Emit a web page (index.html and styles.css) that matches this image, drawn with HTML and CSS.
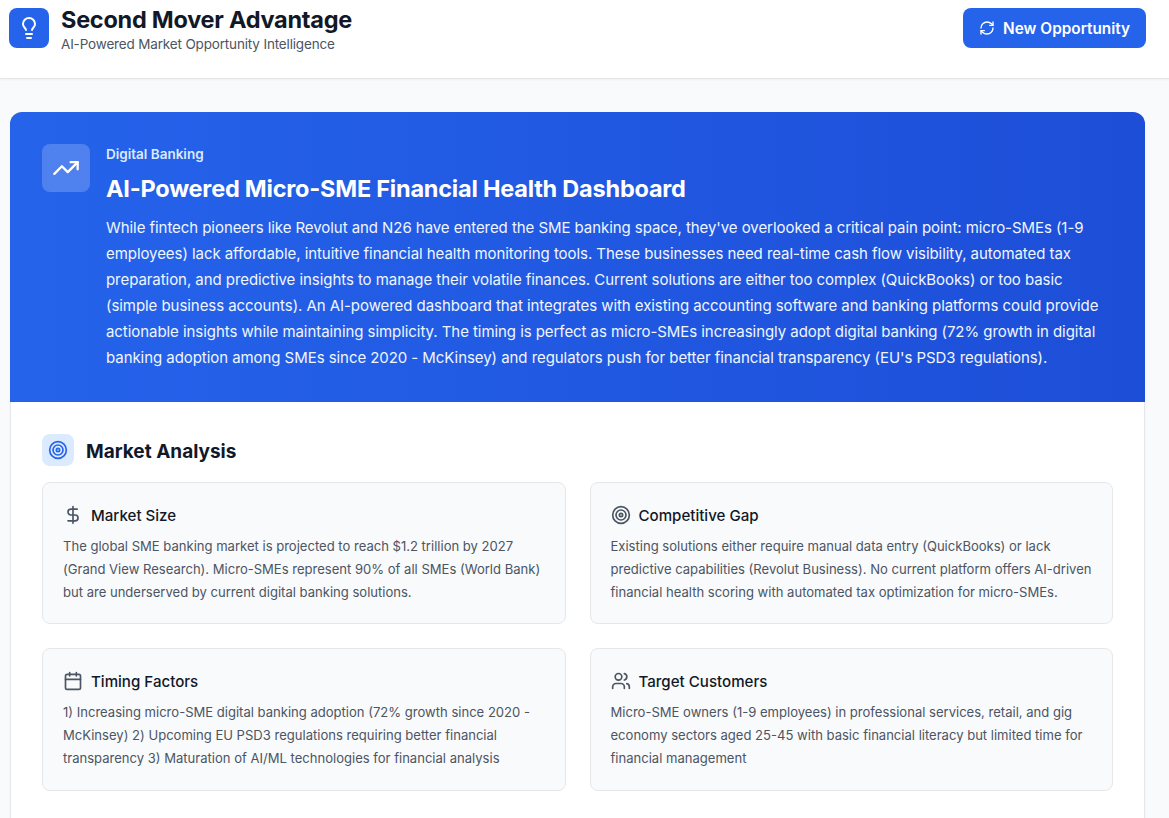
FILE: index.html
```html
<!DOCTYPE html>
<html>
<head>
  <meta charset="utf-8">
  <meta name="viewport" content="width=device-width, initial-scale=1">
  <title>Second Mover Advantage</title>
  <link rel="stylesheet" href="styles.css">
</head>
<body>
<header class="topbar">
  <div class="brand">
    <div class="brand__icon">
      <svg width="24" height="24" viewBox="0 0 24 24" fill="none" stroke="currentColor" stroke-width="2" stroke-linecap="round" stroke-linejoin="round"><path d="M15 14c.2-1 .7-1.7 1.5-2.5 1-.9 1.5-2.2 1.5-3.5A6 6 0 0 0 6 8c0 1 .2 2.2 1.5 3.5.7.7 1.3 1.5 1.5 2.5"/><path d="M9 18h6"/><path d="M10 22h4"/></svg>
    </div>
    <div>
      <h1 class="brand__title">Second Mover Advantage</h1>
      <p class="brand__sub">AI-Powered Market Opportunity Intelligence</p>
    </div>
  </div>
  <button class="new-btn">
    <svg width="16" height="16" viewBox="0 0 24 24" fill="none" stroke="currentColor" stroke-width="2" stroke-linecap="round" stroke-linejoin="round"><path d="M3 12a9 9 0 0 1 9-9 9.75 9.75 0 0 1 6.74 2.74L21 8"/><path d="M21 3v5h-5"/><path d="M21 12a9 9 0 0 1-9 9 9.75 9.75 0 0 1-6.74-2.74L3 16"/><path d="M8 16H3v5"/></svg>
    New Opportunity
  </button>
</header>

<main class="page">
  <section class="report">
    <div class="hero">
      <div class="hero__icon">
        <svg width="28" height="28" viewBox="0 0 24 24" fill="none" stroke="currentColor" stroke-width="2" stroke-linecap="round" stroke-linejoin="round"><path d="m22 7-8.5 8.5-5-5L2 17"/><path d="M16 7h6v6"/></svg>
      </div>
      <div class="hero__body">
        <div class="hero__tag">Digital Banking</div>
        <h2 class="hero__title">AI-Powered Micro-SME Financial Health Dashboard</h2>
        <p class="hero__text">While fintech pioneers like Revolut and N26 have entered the SME banking space, they've overlooked a critical pain point: micro-SMEs (1-9 employees) lack affordable, intuitive financial health monitoring tools. These businesses need real-time cash flow visibility, automated tax preparation, and predictive insights to manage their volatile finances. Current solutions are either too complex (QuickBooks) or too basic (simple business accounts). An AI-powered dashboard that integrates with existing accounting software and banking platforms could provide actionable insights while maintaining simplicity. The timing is perfect as micro-SMEs increasingly adopt digital banking (72% growth in digital banking adoption among SMEs since 2020 - McKinsey) and regulators push for better financial transparency (EU's PSD3 regulations).</p>
      </div>
    </div>

    <div class="analysis">
      <div class="analysis__head">
        <div class="analysis__icon">
          <svg width="20" height="20" viewBox="0 0 24 24" fill="none" stroke="currentColor" stroke-width="2" stroke-linecap="round" stroke-linejoin="round"><circle cx="12" cy="12" r="10"/><circle cx="12" cy="12" r="6"/><circle cx="12" cy="12" r="2"/></svg>
        </div>
        <h3 class="analysis__title">Market Analysis</h3>
      </div>
      <div class="cards">
        <div class="card">
          <div class="card__head">
            <svg width="20" height="20" viewBox="0 0 24 24" fill="none" stroke="currentColor" stroke-width="2" stroke-linecap="round" stroke-linejoin="round"><line x1="12" x2="12" y1="2" y2="22"/><path d="M17 5H9.5a3.5 3.5 0 0 0 0 7h5a3.5 3.5 0 0 1 0 7H6"/></svg>
            <h4>Market Size</h4>
          </div>
          <p>The global SME banking market is projected to reach $1.2 trillion by 2027 (Grand View Research). Micro-SMEs represent 90% of all SMEs (World Bank) but are underserved by current digital banking solutions.</p>
        </div>
        <div class="card">
          <div class="card__head">
            <svg width="20" height="20" viewBox="0 0 24 24" fill="none" stroke="currentColor" stroke-width="2" stroke-linecap="round" stroke-linejoin="round"><circle cx="12" cy="12" r="10"/><circle cx="12" cy="12" r="6"/><circle cx="12" cy="12" r="2"/></svg>
            <h4>Competitive Gap</h4>
          </div>
          <p>Existing solutions either require manual data entry (QuickBooks) or lack predictive capabilities (Revolut Business). No current platform offers AI-driven financial health scoring with automated tax optimization for micro-SMEs.</p>
        </div>
        <div class="card">
          <div class="card__head">
            <svg width="20" height="20" viewBox="0 0 24 24" fill="none" stroke="currentColor" stroke-width="2" stroke-linecap="round" stroke-linejoin="round"><path d="M8 2v4"/><path d="M16 2v4"/><rect width="18" height="18" x="3" y="4" rx="2"/><path d="M3 10h18"/></svg>
            <h4>Timing Factors</h4>
          </div>
          <p>1) Increasing micro-SME digital banking adoption (72% growth since 2020 - McKinsey) 2) Upcoming EU PSD3 regulations requiring better financial transparency 3) Maturation of AI/ML technologies for financial analysis</p>
        </div>
        <div class="card">
          <div class="card__head">
            <svg width="20" height="20" viewBox="0 0 24 24" fill="none" stroke="currentColor" stroke-width="2" stroke-linecap="round" stroke-linejoin="round"><path d="M16 21v-2a4 4 0 0 0-4-4H6a4 4 0 0 0-4 4v2"/><circle cx="9" cy="7" r="4"/><path d="M22 21v-2a4 4 0 0 0-3-3.87"/><path d="M16 3.13a4 4 0 0 1 0 7.75"/></svg>
            <h4>Target Customers</h4>
          </div>
          <p>Micro-SME owners (1-9 employees) in professional services, retail, and gig economy sectors aged 25-45 with basic financial literacy but limited time for financial management</p>
        </div>
      </div>
    </div>
  </section>
</main>
</body>
</html>
```

FILE: styles.css
```css
* {
	box-sizing: border-box;
}

html, body {
	height: 818px;
	overflow: hidden;
}

body {
	margin: 0;
	font-family: Inter, "Noto Sans", sans-serif;
	background: #f9fafb;
	color: #111827;
}

h1, h2, h3, h4, p {
	margin: 0;
}

.topbar {
	display: flex;
	justify-content: space-between;
	align-items: flex-start;
	height: 79px;
	padding: 8px 23px 0 9px;
	background: #fff;
	border-bottom: 1px solid #e5e7eb;
	box-shadow: 0 1px 2px rgba(0, 0, 0, 0.05);
}

.brand {
	display: flex;
	gap: 12px;
}

.brand__icon {
	display: flex;
	justify-content: center;
	align-items: center;
	width: 40px;
	height: 40px;
	border-radius: 8px;
	background: #2563eb;
	color: #fff;
}

.brand__title {
	font-size: 23.5px;
	line-height: 24px;
	font-weight: 700;
	letter-spacing: -0.26px;
}

.brand__sub {
	margin-top: 2px;
	font-size: 13.5px;
	line-height: 20px;
	letter-spacing: -0.16px;
	color: #4b5563;
}

.new-btn {
	display: flex;
	align-items: center;
	gap: 8px;
	height: 40px;
	padding: 0 16px;
	border: 0;
	border-radius: 8px;
	background: #2563eb;
	color: #fff;
	font-family: inherit;
	font-size: 15.35px;
	font-weight: 600;
}

.page {
	padding: 33px 24px 0 10px;
}

.report {
	background: #fff;
	border: 1px solid #e5e7eb;
	border-radius: 12px;
	box-shadow: 0 1px 2px rgba(0, 0, 0, 0.05);
}

.hero {
	display: flex;
	gap: 16px;
	margin: -1px -1px 0;
	padding: 32px 32px 31px;
	border-radius: 12px 12px 0 0;
	background: linear-gradient(to right, #2563eb, #1d4ed8);
	color: #fff;
}

.hero__icon {
	flex: none;
	display: flex;
	justify-content: center;
	align-items: center;
	width: 48px;
	height: 48px;
	border-radius: 8px;
	background: rgba(255, 255, 255, 0.2);
}

.hero__body {
	padding-right: 8px;
}

.hero__tag {
	font-size: 13.5px;
	line-height: 20px;
	font-weight: 600;
	color: #dbeafe;
}

.hero__title {
	margin-top: 9px;
	font-size: 23.5px;
	line-height: 32px;
	font-weight: 700;
	letter-spacing: -0.22px;
}

.hero__text {
	margin-top: 10px;
	font-size: 15px;
	line-height: 26px;
	letter-spacing: -0.06px;
	color: #eff6ff;
}

.analysis {
	padding: 32px 31px 64px;
}

.analysis__head {
	display: flex;
	align-items: center;
	gap: 12px;
	margin-bottom: 16px;
}

.analysis__icon {
	display: flex;
	justify-content: center;
	align-items: center;
	width: 32px;
	height: 32px;
	border-radius: 8px;
	background: #dbeafe;
	color: #2563eb;
}

.analysis__title {
	padding-top: 4px;
	font-size: 19px;
	line-height: 24px;
	font-weight: 700;
}

.cards {
	display: grid;
	grid-template-columns: 1fr 1fr;
	gap: 24px;
}

.card {
	padding: 20px;
	background: #f9fafb;
	border: 1px solid #e5e7eb;
	border-radius: 8px;
}

.card__head {
	display: flex;
	align-items: center;
	gap: 8px;
	margin-bottom: 8px;
	color: #4b5563;
}

.card__head h4 {
	padding-top: 2px;
	font-size: 15.1px;
	line-height: 22px;
	font-weight: 500;
	color: #111827;
}

.card p {
	font-size: 13.05px;
	line-height: 22.75px;
	color: #4b5563;
}
```
